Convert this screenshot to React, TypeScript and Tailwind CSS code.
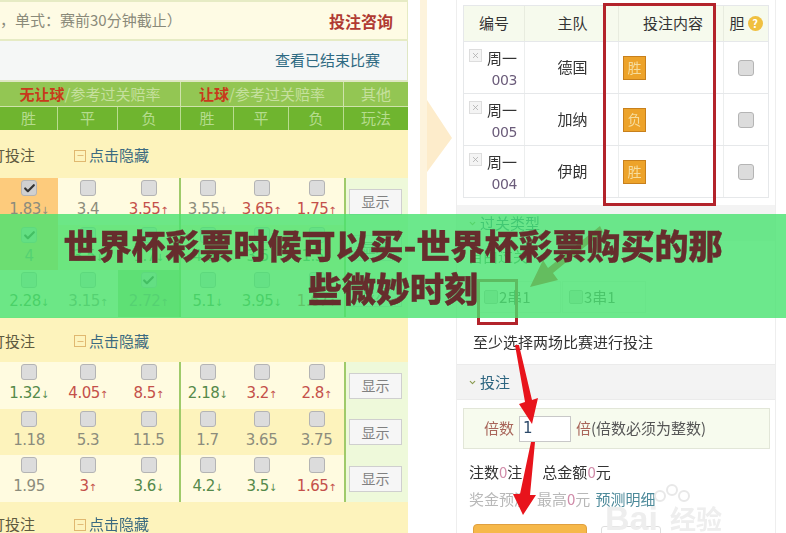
import React from "react";
import { Check, ChevronDown, Minus, X } from "lucide-react";

const cjk = { fontFamily: '"Noto Sans CJK SC","Liberation Sans",sans-serif' };

type Odd = { v: string; c?: "r" | "g" | "n"; a?: "u" | "d"; on?: boolean; bg?: string };

const Box = ({ on }: { on?: boolean }) => (
  <div className={`flex h-[16px] w-[16px] items-center justify-center rounded-[3px] border border-[#b4b4b4] ${on ? "bg-[#d0d0d0]" : "bg-[#dcdcdc]"}`}>
    {on ? <Check size={13} strokeWidth={4} className="text-[#333333]" /> : null}
  </div>
);

const Cell = ({ o }: { o: Odd }) => {
  const col = o.c === "r" ? "text-[#c4504a]" : o.c === "g" ? "text-[#55894a]" : "text-[#8c8c7c]";
  return (
    <div className={`flex flex-col items-center pt-[2px] ${o.bg ?? ""}`}>
      <Box on={o.on} />
      <div className={`mt-[3px] whitespace-nowrap text-[15px] leading-[20px] ${col}`} style={{ fontFamily: '"DejaVu Sans",sans-serif', letterSpacing: "-0.5px" }}>
        {o.v}
        {o.a ? <span className="text-[10px]">{o.a === "u" ? "↑" : "↓"}</span> : null}
      </div>
    </div>
  );
};

const Row = ({ odds, bg, h = "h-[47px]" }: { odds: Odd[]; bg: string; h?: string }) => (
  <div className={`grid ${h} shrink-0 grid-cols-[58px_60px_63px_53px_55px_55px_64px] ${bg}`}>
    {odds.map((o, i) => (
      <div key={i} className={i === 2 ? "grid border-r-2 border-[#9fca6a]" : "grid"}>
        <Cell o={o} />
      </div>
    ))}
    <div className="flex items-center border-l-2 border-[#9fca6a] bg-[#eef9da] pl-[3px]" style={cjk}>
      <div className="flex h-[26px] w-[53px] items-center justify-center border border-[#cfcfcf] bg-[#f6f6f6] text-[14px] text-[#808080]">显示</div>
    </div>
  </div>
);

const Section = ({ h }: { h: string }) => (
  <div className={`flex ${h} shrink-0 items-center bg-[#fdf3bc] pt-[3px] text-[15px]`} style={cjk}>
    <div className="flex w-[35px] justify-end overflow-hidden whitespace-nowrap text-[#5e5a40]">打投注</div>
    <div className="ml-[39px] flex h-[12px] w-[12px] items-center justify-center border border-[#e0b870]">
      <Minus size={9} className="text-[#d8a860]" />
    </div>
    <div className="ml-[3px] text-[#3b6a80]">点击隐藏</div>
  </div>
);

const THead = ({ t, cls }: { t: React.ReactNode; cls?: string }) => (
  <div className={`flex items-center justify-center ${cls ?? ""}`}>{t}</div>
);

const Bet = ({ t }: { t: string }) => (
  <div className="flex h-[24px] w-[23px] items-center justify-center border border-[#c8801c] bg-[#eda32a] text-[14px] text-[#f6dc9c]">{t}</div>
);

const GHead = ({ t }: { t: string }) => (
  <div className="flex items-center gap-[3px] pl-[11px] text-[15px] text-[#2d6580]">
    <ChevronDown size={9} strokeWidth={3} className="text-[#8a9a50]" />
    {t}
  </div>
);

const Opt = ({ t }: { t: string }) => (
  <div className="flex h-[32px] w-[84px] items-center gap-[1px] border border-[#eeeeee] pl-[6px] text-[15px] text-[#555555]">
    <span className="h-[14px] w-[14px] rounded-[2px] border border-[#b8b8b8] bg-[#dcdcdc]"></span>
    {t}
  </div>
);

export default function App() {
  return (
    <div className="relative h-[533px] w-[786px] overflow-hidden bg-white" style={cjk}>
      <div className="relative flex h-[533px] blur-[0.6px]">
        {/* left panel */}
        <div className="flex w-[408px] shrink-0 flex-col">
          <div className="flex h-[41px] shrink-0 items-center justify-between border-y-2 border-r border-[#e6ebc4] bg-[#fefbe4] pr-[14px] text-[15px] text-[#8a8a7a]">
            <span className="whitespace-nowrap">，单式：赛前30分钟截止）</span>
            <span className="text-[16px] font-bold text-[#b03a32]">投注咨询</span>
          </div>
          <div className="flex h-[41px] shrink-0 items-center justify-end border-b-2 border-r border-[#dfe7c4] bg-[#f5f7f6] pr-[27px] text-[15px] text-[#2e6a82]">
            查看已结束比赛
          </div>
          <div className="grid h-[24px] shrink-0 grid-cols-[181px_163px_64px] bg-[#93c653] text-[15px] text-[#c5e09d]">
            <THead t={<span><b className="text-[#c83a1c]">无让球</b>/参考过关赔率</span>} cls="border-r border-[#cfe3ab]" />
            <THead t={<span><b className="text-[#c83a1c]">让球</b>/参考过关赔率</span>} cls="border-r border-[#cfe3ab]" />
            <THead t="其他" />
          </div>
          <div className="grid h-[24px] shrink-0 grid-cols-[58px_60px_63px_53px_55px_55px_64px] border-t border-[#cfe3ab] bg-[#6fb52f] text-[15px] text-[#b5dc8e]">
            <THead t="胜" cls="border-r border-[#b9dc90]" />
            <THead t="平" cls="border-r border-[#b9dc90]" />
            <THead t="负" cls="border-r border-[#b9dc90]" />
            <THead t="胜" cls="border-r border-[#b9dc90]" />
            <THead t="平" cls="border-r border-[#b9dc90]" />
            <THead t="负" cls="border-r border-[#b9dc90]" />
            <THead t="玩法" />
          </div>
          <Section h="h-[48px]" />
          <Row
            bg="bg-[#fffbe0]"
            odds={[
              { v: "1.83", c: "n", a: "d", on: true, bg: "bg-[#fdcb7c]" },
              { v: "3.4" },
              { v: "3.55", c: "r", a: "u" },
              { v: "3.55", c: "n", a: "d" },
              { v: "3.65", c: "r", a: "u" },
              { v: "1.75", c: "r", a: "u" },
            ]}
          />
          <Row
            bg="bg-[#fdf3bc]"
            h="h-[45px]"
            odds={[
              { v: "4", on: true, bg: "bg-[#fdcb7c]" },
              { v: "3.5", c: "g", a: "d" },
              { v: "1.7", c: "g", a: "d" },
              { v: "4.6", c: "g", a: "d" },
              { v: "3.5", c: "g", a: "d" },
              { v: "1.5", c: "g", a: "d" },
            ]}
          />
          <Row
            bg="bg-[#fffbe0]"
            odds={[
              { v: "2.28", c: "g", a: "d" },
              { v: "3.15", c: "n", a: "u" },
              { v: "2.72", c: "n", a: "u", on: true, bg: "bg-[#b8d88a]" },
              { v: "5.1", c: "g", a: "d" },
              { v: "3.95", c: "g", a: "d" },
              { v: "1.67", c: "r", a: "u" },
            ]}
          />
          <Section h="h-[45px]" />
          <Row
            bg="bg-[#fffbe0]"
            odds={[
              { v: "1.32", c: "g", a: "d" },
              { v: "4.05", c: "r", a: "u" },
              { v: "8.5", c: "r", a: "u" },
              { v: "2.18", c: "g", a: "d" },
              { v: "3.2", c: "r", a: "u" },
              { v: "2.8", c: "r", a: "u" },
            ]}
          />
          <Row
            bg="bg-[#fdf3bc]"
            h="h-[46px]"
            odds={[{ v: "1.18" }, { v: "5.3" }, { v: "11.5" }, { v: "1.7" }, { v: "3.65" }, { v: "3.75" }]}
          />
          <Row
            bg="bg-[#fffbe0]"
            odds={[
              { v: "1.95" },
              { v: "3", c: "r", a: "u" },
              { v: "3.6", c: "g", a: "d" },
              { v: "4.2", c: "g", a: "d" },
              { v: "3.5", c: "g", a: "d" },
              { v: "1.65", c: "r", a: "u" },
            ]}
          />
          <Section h="h-[42px]" />
        </div>

        <div className="w-[12px] shrink-0" />

        {/* connector */}
        <div className="flex h-[215px] w-[36px] shrink-0 items-start">
          <div className="h-full w-[7px] bg-[#fdf3dc]" />
          <svg width="26" height="215" viewBox="0 0 26 215" className="shrink-0">
            <path d="M0 100 L25 138 L0 172 Z" fill="#fdeccb" />
          </svg>
        </div>

        {/* right panel */}
        <div className="flex w-[320px] shrink-0 flex-col border-x border-[#eeeeee]">
          <div className="shrink-0 px-[6px] pt-[5px]">
            <div className="w-[306px] border-x border-[#e6e8ea]">
              <div className="grid h-[37px] grid-cols-[61px_93px_105px_45px] border-y border-[#e6e8ea] bg-[#f6faed] text-[15px] text-[#333333]">
                <THead t="编号" cls="border-r border-[#e8ecdf]" />
                <THead t="主队" cls="pl-[2px]" />
                <THead t="投注内容" cls="border-l border-[#e8ecdf] pl-[4px]" />
                <THead
                  t={
                    <span className="flex items-center gap-[3px]">
                      胆
                      <span className="flex h-[15px] w-[15px] items-center justify-center rounded-full bg-[#f0c040] text-[11px] font-bold text-white">?</span>
                    </span>
                  }
                  cls="border-l border-[#e8ecdf]"
                />
              </div>
              {[
                { a: "003", b: "德国", t: "胜" },
                { a: "005", b: "加纳", t: "负" },
                { a: "004", b: "伊朗", t: "胜" },
              ].map((r) => (
                <div key={r.a} className="grid h-[52px] grid-cols-[61px_93px_105px_45px] border-b border-[#e6e8ea]">
                  <div className="flex items-start border-r border-[#eceeee] pl-[5px] pt-[5px]">
                    <div className="mt-[2px] flex h-[13px] w-[13px] shrink-0 items-center justify-center border border-[#dddddd] bg-[#f4f4f4]">
                      <X size={9} className="text-[#aaaaaa]" />
                    </div>
                    <div className="ml-[5px] text-right text-[15px] leading-[22px] text-[#333333]">
                      周一
                      <div className="text-[#6b5c7a]" style={{ fontFamily: '"DejaVu Sans",sans-serif', fontSize: 14, letterSpacing: "-0.4px" }}>{r.a}</div>
                    </div>
                  </div>
                  <div className="flex items-center justify-center pl-[2px] text-[15px] text-[#333333]">{r.b}</div>
                  <div className="flex items-center border-l border-[#eceeee] pl-[4px]"><Bet t={r.t} /></div>
                  <div className="flex items-center justify-center border-l border-[#eceeee]"><Box /></div>
                </div>
              ))}
            </div>
          </div>
          <div className="mt-[7px] flex h-[36px] shrink-0 items-center bg-[#f3f3f3]"><GHead t="过关类型" /></div>
          <div className="flex h-[30px] shrink-0 items-center pl-[11px] text-[15px] text-[#4a8a60]">自由过关</div>
          <div className="mt-[10px] flex shrink-0 gap-[1px] pl-[20px]">
            <Opt t="2串1" />
            <Opt t="3串1" />
          </div>
          <div className="mt-[17px] shrink-0 pl-[16px] text-[15px] leading-[24px] text-[#333333]">至少选择两场比赛进行投注</div>
          <div className="mt-[10px] flex h-[36px] shrink-0 items-center border-y border-[#ebebeb] bg-[#f3f3f3]"><GHead t="投注" /></div>
          <div className="mx-[6px] mt-[8px] flex h-[41px] w-[307px] shrink-0 items-center border border-[#e2e6d8] bg-[#f7fbee] pl-[20px] text-[15px] text-[#a8655a]">
            倍数
            <div className="mx-[5px] flex h-[26px] w-[52px] items-center border border-[#c8c8c8] bg-white pl-[3px] text-[15px] text-[#2d4a6a]" style={{ fontFamily: '"DejaVu Sans",sans-serif' }}>1</div>
            倍<span className="text-[#555555]">(倍数必须为整数)</span>
          </div>
          <div className="mt-[12px] flex h-[22px] shrink-0 items-center pl-[12px] text-[15px] text-[#333333]">
            注数<span className="text-[#d08aa8]">0</span>注
            <span className="ml-[20px]">总金额<span className="text-[#d08aa8]">0</span>元</span>
          </div>
          <div className="mt-[5px] flex h-[22px] shrink-0 items-center pl-[12px] text-[15px] text-[#b8b8b8]">
            奖金预测
            <span className="ml-[8px]">最高<span className="text-[#d08aa8]">0</span>元</span>
            <span className="ml-[5px] text-[#4d8a9a]">预测明细</span>
          </div>
          <div className="mt-[14px] flex shrink-0 gap-[14px] pl-[16px]">
            <div className="h-[30px] w-[114px] rounded-[4px] border border-[#e0a040] bg-[#f6b84a]" />
            <div className="mt-[2px] h-[30px] w-[60px] rounded-[3px] border border-[#dddddd]" />
          </div>
        </div>

        {/* annotations lying over the screenshot */}
        <div className="absolute left-[603px] top-[3px] h-[203px] w-[113px] border-[3px] border-[#b3232b]" />
        <div className="absolute left-[477px] top-[279px] h-[46px] w-[41px] border-[3px] border-[#b3232b]" />
        <svg className="absolute left-0 top-0" width="786" height="533" viewBox="0 0 786 533">
          <path d="M600 226 L548 268 L543 260 L530 287 L558 280 L553 273 L603 232 Z" fill="#d6281e" />
          <path d="M515 345 L519 345 L532 400 L538 398 L532 424 L519 404 L525 402 Z" fill="#e8141c" />
          <path d="M531 442 L535 442 L530 495 L536 495 L523 515 L513 494 L520 494 Z" fill="#e8141c" />
          <g fill="none" stroke="#e8e8e8" strokeWidth="2">
            <circle cx="660" cy="496" r="5" />
            <circle cx="672" cy="490" r="5" />
            <circle cx="684" cy="496" r="5" />
          </g>
        </svg>
        <div className="absolute left-[605px] top-[500px] flex items-center gap-[12px] text-[34px] font-bold leading-[36px] text-[#eeeeee]" style={{ fontFamily: '"Liberation Sans",sans-serif' }}>
          Bai<span style={cjk} className="text-[26px]">经验</span>
        </div>
      </div>

      {/* title banner */}
      <div className="absolute left-0 top-[214px] flex h-[104px] w-[786px] items-center justify-center bg-[#47e26f]/80 px-[60px]">
        <h1 className="text-center text-[34px] font-black leading-[43px] text-[#662d2d] [-webkit-text-stroke:0.4px_#662d2d]" style={cjk}>
          世界杯彩票时候可以买-世界杯彩票购买的那些微妙时刻
        </h1>
      </div>
    </div>
  );
}
